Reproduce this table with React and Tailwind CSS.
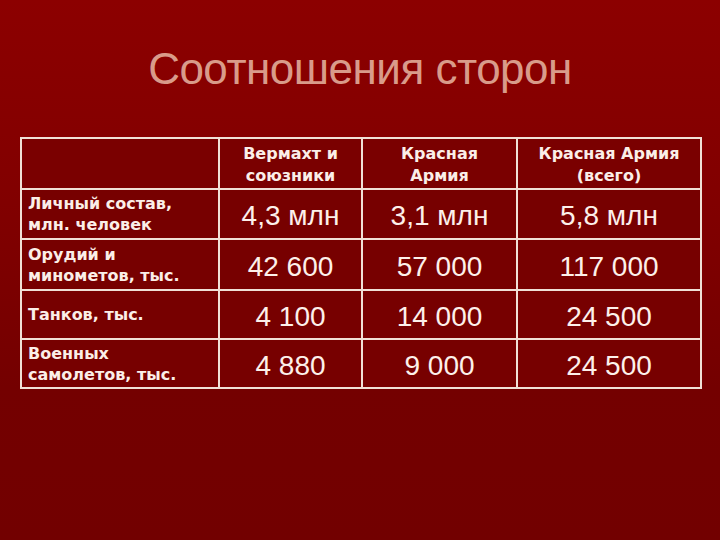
import React from "react";

const rows = [
  { label: ["Личный состав,", "млн. человек"], vals: ["4,3 млн", "3,1 млн", "5,8 млн"], h: "h-[50px]" },
  { label: ["Орудий и", "минометов, тыс."], vals: ["42 600", "57 000", "117 000"], h: "h-[51px]" },
  { label: ["Танков, тыс."], vals: ["4 100", "14 000", "24 500"], h: "h-[49px]" },
  { label: ["Военных", "самолетов, тыс."], vals: ["4 880", "9 000", "24 500"], h: "h-[49px]" },
];

const headers = [
  ["Вермахт и", "союзники"],
  ["Красная", "Армия"],
  ["Красная Армия", "(всего)"],
];

export default function App() {
  return (
    <div className="w-[720px] h-[540px] overflow-hidden bg-[linear-gradient(to_bottom,#8c0000_0%,#820000_35%,#740000_72%,#720000_100%)] flex flex-col">
      <h1 className="mt-[46px] text-center text-[44px] leading-[46px] tracking-[-0.5px] text-[#d99b8a] font-['Liberation_Sans',Arial,sans-serif]">
        Соотношения сторон
      </h1>
      <table className="mt-[45px] ml-[20px] w-[680px] table-fixed border-collapse border-2 border-[#f0e0d6]">
        <colgroup>
          <col className="w-[198px]" />
          <col className="w-[143px]" />
          <col className="w-[155px]" />
          <col className="w-[184px]" />
        </colgroup>
        <thead>
          <tr className="h-[51px]">
            <th className="border-2 border-[#f0e0d6] bg-[#7a0000]"></th>
            {headers.map((h, i) => (
              <th
                key={i}
                className="border-2 border-[#f0e0d6] bg-[#7a0000] text-center align-middle pt-[2px] font-bold text-[16px] leading-[22px] text-[#fbeee8] font-['DejaVu_Sans',Verdana,sans-serif]"
              >
                <div>{h[0]}</div>
                <div>{h[1]}</div>
              </th>
            ))}
          </tr>
        </thead>
        <tbody>
          {rows.map((r, i) => (
            <tr key={i} className={r.h}>
              <td className="border-2 border-[#f0e0d6] bg-[#770000] pl-[6px] align-middle font-bold text-[16px] leading-[21px] text-[#fbeee8] font-['DejaVu_Sans',Verdana,sans-serif]">
                {r.label.map((l, j) => (
                  <div key={j}>{l}</div>
                ))}
              </td>
              {r.vals.map((v, j) => (
                <td
                  key={j}
                  className="border-2 border-[#f0e0d6] bg-[#770000] text-center align-middle pt-[4px] text-[28px] leading-[30px] text-[#fdf0ea] font-['Liberation_Sans',Arial,sans-serif]"
                >
                  {v}
                </td>
              ))}
            </tr>
          ))}
        </tbody>
      </table>
    </div>
  );
}
